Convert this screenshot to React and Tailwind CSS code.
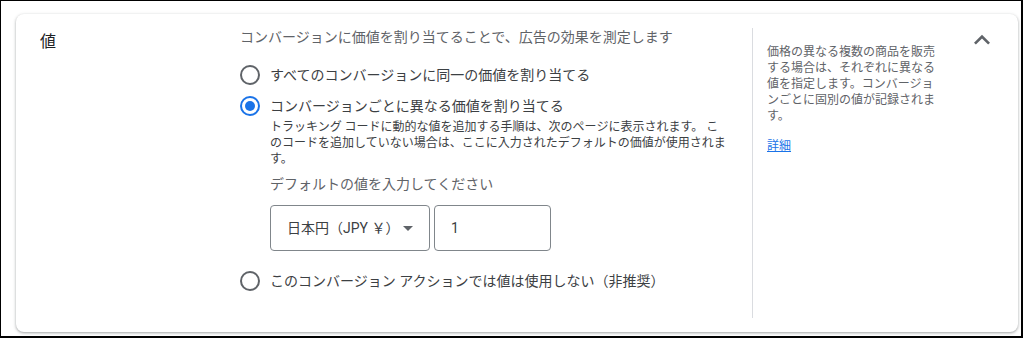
import React, { useState } from 'react';

const Radio = ({ checked, onClick }) => (
  <button
    type="button"
    onClick={onClick}
    className={`flex h-5 w-5 shrink-0 items-center justify-center rounded-full border-2 ${
      checked ? 'border-[#1a73e8]' : 'border-[#5f6368]'
    }`}
  >
    {checked && <span className="h-2.5 w-2.5 rounded-full bg-[#1a73e8]" />}
  </button>
);

const App = () => {
  const [mode, setMode] = useState('each');
  const [value, setValue] = useState('1');

  return (
    <div className="h-[343px] w-[1024px] bg-white font-[Roboto,'Noto_Sans_CJK_JP',sans-serif]">
      <div className="h-[338px] w-[1023px] border-l border-t border-r-2 border-b-2 border-black pl-[15px] pt-[13px]">
        <div className="flex h-[318px] w-[1002px] rounded-lg bg-white shadow-[0_1px_2px_rgba(60,64,67,0.3),0_1px_3px_1px_rgba(60,64,67,0.15)]">
          {/* title */}
          <div className="w-[224px] shrink-0 pl-6 pt-[16px]">
            <h2 className="text-base leading-6 text-[#202124]">値</h2>
          </div>

          {/* options */}
          <div className="w-[512px] shrink-0 pt-[13px]">
            <p className="text-sm leading-5 text-[#5f6368]">
              コンバージョンに価値を割り当てることで、広告の効果を測定します
            </p>

            <div className="mt-[18px] flex items-center gap-2.5">
              <Radio checked={mode === 'same'} onClick={() => setMode('same')} />
              <span className="text-sm leading-5 text-[#3c4043]">
                すべてのコンバージョンに同一の価値を割り当てる
              </span>
            </div>

            <div className="mt-[11px] flex items-center gap-2.5">
              <Radio checked={mode === 'each'} onClick={() => setMode('each')} />
              <span className="text-sm leading-5 text-[#3c4043]">
                コンバージョンごとに異なる価値を割り当てる
              </span>
            </div>

            <div className="pl-[30px]">
              <p className="mt-[3px] w-[460px] text-xs leading-4 text-[#3c4043]">
                トラッキング コードに動的な値を追加する手順は、次のページに表示されます。 このコードを追加していない場合は、ここに入力されたデフォルトの価値が使用されます。
              </p>
              <p className="mt-[7px] text-sm leading-5 text-[#5f6368]">
                デフォルトの値を入力してください
              </p>
              <div className="mt-[11px] flex gap-1">
                <div className="flex h-[46px] w-[160px] items-center justify-between rounded border border-[#80868b] pl-4 pr-4">
                  <span className="text-sm text-[#3c4043]">日本円（JPY ￥）</span>
                  <span className="h-0 w-0 border-x-[5px] border-t-[5px] border-x-transparent border-t-[#5f6368]" />
                </div>
                <input
                  value={value}
                  onChange={(e) => setValue(e.target.value)}
                  className="h-[46px] w-[117px] rounded border border-[#80868b] px-4 text-sm text-[#3c4043] outline-none"
                />
              </div>
            </div>

            <div className="mt-5 flex items-center gap-2.5">
              <Radio checked={mode === 'none'} onClick={() => setMode('none')} />
              <span className="text-sm leading-5 text-[#3c4043]">
                このコンバージョン アクションでは値は使用しない（非推奨）
              </span>
            </div>
          </div>

          {/* help */}
          <div className="my-[14px] w-px shrink-0 bg-[#dadce0]" />
          <div className="w-[200px] shrink-0 pl-[14px] pt-[30px]">
            <p className="w-[170px] text-xs leading-4 text-[#5f6368]">
              価格の異なる複数の商品を販売する場合は、それぞれに異なる値を指定します。コンバージョンごとに固別の値が記録されます。
            </p>
            <a href="#" className="mt-[14px] block text-xs leading-4 text-[#1a73e8] underline">
              詳細
            </a>
          </div>

          <div className="flex flex-1 justify-end pr-5 pt-[10px]">
            <svg width="32" height="32" viewBox="0 0 24 24" fill="#5f6368">
              <path d="M7.41 15.41 12 10.83l4.59 4.58L18 14l-6-6-6 6z" />
            </svg>
          </div>
        </div>
      </div>
    </div>
  );
};

export default App;
